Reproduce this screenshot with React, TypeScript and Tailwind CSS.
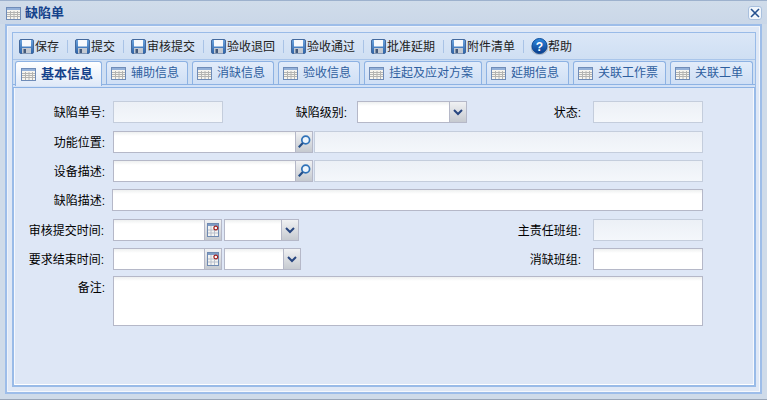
import React from 'react';

const font = { fontFamily: '"Liberation Sans", "Noto Sans CJK SC", sans-serif' };

const SaveIcon = () => (
  <svg width="15" height="15" viewBox="0 0 15 15" className="shrink-0">
    <defs>
      <linearGradient id="saveFill" x1="0" y1="0" x2="0" y2="1">
        <stop offset="0" stopColor="#6ea6e0" />
        <stop offset="1" stopColor="#2b62a8" />
      </linearGradient>
    </defs>
    <rect x="0.5" y="0.5" width="14" height="14" rx="1.5" fill="url(#saveFill)" stroke="#44699c" />
    <rect x="3" y="1" width="9" height="6.5" fill="#f6f9fd" />
    <rect x="3" y="9" width="9" height="5.5" fill="#c3c9d2" />
    <rect x="4.5" y="10" width="2.5" height="4" fill="#435a7c" />
  </svg>
);

const TableIcon = () => (
  <svg width="15" height="13" viewBox="0 0 15 13" className="shrink-0">
    <rect x="0.5" y="0.5" width="14" height="12" fill="#f7f5ef" stroke="#6f8cb8" />
    <rect x="1" y="1" width="13" height="2" fill="#94b1d9" />
    <path d="M1 5.5h13M1 7.5h13M1 9.5h13M4.5 4v8M8 4v8M11.5 4v8" stroke="#b4b4b2" strokeWidth="1" fill="none" />
  </svg>
);

const HelpIcon = () => (
  <svg width="17" height="17" viewBox="0 0 17 17" className="shrink-0">
    <defs>
      <linearGradient id="helpFill" x1="0" y1="0" x2="0" y2="1">
        <stop offset="0" stopColor="#2f8ae0" />
        <stop offset="1" stopColor="#0a3c8c" />
      </linearGradient>
    </defs>
    <ellipse cx="8.5" cy="10" rx="8.5" ry="7" fill="#8f98a6" opacity="0.6" />
    <circle cx="8.5" cy="8" r="7.5" fill="url(#helpFill)" stroke="#0d4a96" />
    <text x="8.5" y="12.5" textAnchor="middle" fontSize="12" fontWeight="700" fill="#fff" fontFamily="Liberation Sans">?</text>
  </svg>
);

const Chevron = () => (
  <svg width="10" height="7" viewBox="0 0 10 7">
    <path d="M1 1l4 4 4-4" stroke="#27457f" strokeWidth="2" fill="none" />
  </svg>
);

const SearchIcon = () => (
  <svg width="14" height="14" viewBox="0 0 14 14">
    <circle cx="8.7" cy="5" r="3.9" fill="#eef5fc" stroke="#2f72b8" strokeWidth="1.7" />
    <path d="M5.8 8L1.8 12.2" stroke="#234f8a" strokeWidth="2.2" />
  </svg>
);

const CalendarIcon = () => (
  <svg width="12" height="14" viewBox="0 0 12 14">
    <rect x="0.5" y="0.5" width="11" height="13" fill="#f4f4f2" stroke="#6f8ab2" />
    <rect x="1" y="1" width="10" height="2" fill="#7f9cc4" />
    <path d="M1 7h10M1 10h10M4 3v10M7.5 3v10" stroke="#b9c0cc" fill="none" />
    <circle cx="8.8" cy="5" r="1.9" fill="#fff" stroke="#a01c1c" strokeWidth="1.2" />
  </svg>
);

const CloseIcon = () => (
  <svg width="10" height="10" viewBox="0 0 10 10">
    <path d="M1 1l8 8M9 1l-8 8" stroke="#24508f" strokeWidth="1.6" fill="none" />
  </svg>
);

const inputBox = 'h-[22px] border border-[#b5b8c8] bg-white bg-gradient-to-b from-[#eef0f0] to-white to-[4px]';
const roInput = 'h-[22px] border border-[#c4cddc] bg-gradient-to-b from-[#ecf0f6] to-[#f4f7fb]';

const Label = ({ text, w }: { text: string; w: string }) => (
  <span className={`${w} shrink-0 pt-[1px] text-right text-[12px] leading-[22px] text-black`}>{text}</span>
);

const Combo = ({ w, children }: { w: string; children: React.ReactNode }) => (
  <div className={`${w} flex h-[22px] shrink-0 border border-[#b5b8c8] bg-white bg-gradient-to-b from-[#eef0f0] to-white to-[4px]`}>
    <div className="flex-1" />
    <div className="flex h-full w-[17px] shrink-0 items-center justify-center border-l border-[#b5b8c8] bg-gradient-to-b from-[#f0f1f3] to-[#c6cad0]">
      {children}
    </div>
  </div>
);

const tools = ['保存', '提交', '审核提交', '验收退回', '验收通过', '批准延期', '附件清单'];

const tabs = [
  { t: '基本信息', w: 'w-[87px]', on: true },
  { t: '辅助信息', w: 'w-[82px]' },
  { t: '消缺信息', w: 'w-[82px]' },
  { t: '验收信息', w: 'w-[82px]' },
  { t: '挂起及应对方案', w: 'w-[118px]' },
  { t: '延期信息', w: 'w-[83px]' },
  { t: '关联工作票', w: 'w-[93px]' },
  { t: '关联工单', w: 'w-[83px]' },
];

export default function App() {
  return (
    <div className="flex h-[400px] w-[767px] flex-col overflow-hidden border-y border-t-[#9db1cd] border-b-[#9aa6b8] bg-[#cfdbe9]" style={font}>
      {/* title bar */}
      <div className="flex h-[23px] shrink-0 items-center bg-gradient-to-b from-[#d0dcea] to-[#cad7e8] pl-[6px] pr-[5px] pt-[1px]">
        <TableIcon />
        <span className="ml-[4px] text-[13px] font-bold text-[#15428b]">缺陷单</span>
        <div className="ml-auto flex h-[14px] w-[14px] items-center justify-center rounded-[3px] border border-[#a9c0de] bg-[#f1f6fc]">
          <CloseIcon />
        </div>
      </div>

      {/* window frame */}
      <div className="mx-[5px] mb-[5px] flex min-h-0 flex-1 flex-col border-2 border-[#9dbde9] bg-[#dfe8f6] pb-[5px] pl-[5px] pr-[4px] pt-[6px] shadow-[inset_1px_1px_0_#eef3fb,inset_-1px_-1px_0_#f5f8fd]">
        <div className="flex min-h-0 flex-1 flex-col border border-[#99bbe8]">
          {/* toolbar */}
          <div className="flex h-[27px] shrink-0 items-center border-b border-[#a9c5ea] bg-gradient-to-b from-[#dbe7f7] to-[#cfdff3] pl-[6px] pt-[1px] text-[12px] text-[#222]">
            {tools.map(t => (
              <React.Fragment key={t}>
                <SaveIcon />
                <span className="ml-[1px]">{t}</span>
                <span className="ml-[8px] mr-[7px] h-[13px] w-px bg-[#a9c3e6]" />
              </React.Fragment>
            ))}
            <HelpIcon />
            <span>帮助</span>
          </div>

          {/* tabs */}
          <div className="relative z-10 flex h-[24px] shrink-0 items-start gap-[4px] bg-[#cfdff3] pl-[2px] pt-[1px]">
            {tabs.map(tab => (
              <div
                key={tab.t}
                className={`${tab.w} flex shrink-0 items-center gap-[5px] rounded-t-[3px] border border-b-0 border-[#8db2e3] ${
                  tab.on
                    ? 'h-[25px] bg-gradient-to-b from-white to-[#dfe9f8] pl-[5px] text-[13px] font-bold text-[#15428b]'
                    : 'h-[23px] bg-gradient-to-b from-[#e2ecfa] to-[#cfdff5] pl-[4px] text-[12px] text-[#2f5f9f]'
                }`}
              >
                <TableIcon />
                <span>{tab.t}</span>
              </div>
            ))}
          </div>
          <div className="h-[4px] shrink-0 border-y border-[#8db2e3] bg-[#d3e2f7]" />

          {/* form */}
          <div className="min-h-0 flex-1 border-x border-b border-[#99bbe8] bg-[#dee7f6] pt-[13px] shadow-[inset_1px_0_0_#f5f8fd,inset_0_-1px_0_#fff,inset_-1px_0_0_#f5f8fd]">
            <div className="flex h-[22px]">
              <Label text="缺陷单号:" w="w-[99px] pr-[8px]" />
              <div className={`${roInput} w-[110px]`} />
              <Label text="缺陷级别:" w="w-[134px] pr-[10px]" />
              <Combo w="w-[110px]"><Chevron /></Combo>
              <Label text="状态:" w="w-[126px] pr-[12px]" />
              <div className={`${roInput} w-[110px]`} />
            </div>

            <div className="mt-[8px] flex h-[22px]">
              <Label text="功能位置:" w="w-[99px] pr-[8px]" />
              <Combo w="w-[200px]"><SearchIcon /></Combo>
              <div className={`${roInput} ml-[1px] w-[389px]`} />
            </div>

            <div className="mt-[7px] flex h-[22px]">
              <Label text="设备描述:" w="w-[99px] pr-[8px]" />
              <Combo w="w-[200px]"><SearchIcon /></Combo>
              <div className={`${roInput} ml-[1px] w-[389px]`} />
            </div>

            <div className="mt-[7px] flex h-[22px]">
              <Label text="缺陷描述:" w="w-[98px] pr-[7px]" />
              <div className={`${inputBox} w-[591px]`} />
            </div>

            <div className="mt-[8px] flex h-[22px]">
              <Label text="审核提交时间:" w="w-[99px] pr-[9px]" />
              <Combo w="w-[109px]"><CalendarIcon /></Combo>
              <Combo w="ml-[2px] w-[75px]"><Chevron /></Combo>
              <Label text="主责任班组:" w="w-[294px] pr-[12px]" />
              <div className={`${roInput} w-[110px]`} />
            </div>

            <div className="mt-[7px] flex h-[22px]">
              <Label text="要求结束时间:" w="w-[99px] pr-[9px]" />
              <Combo w="w-[109px]"><CalendarIcon /></Combo>
              <Combo w="ml-[2px] w-[77px]"><Chevron /></Combo>
              <Label text="消缺班组:" w="w-[292px] pr-[12px]" />
              <div className={`${inputBox} w-[110px]`} />
            </div>

            <div className="mt-[6px] flex">
              <Label text="备注:" w="w-[99px] pr-[8px]" />
              <div className={`${inputBox} h-[50px] w-[590px]`} />
            </div>
          </div>
        </div>
      </div>
    </div>
  );
}
